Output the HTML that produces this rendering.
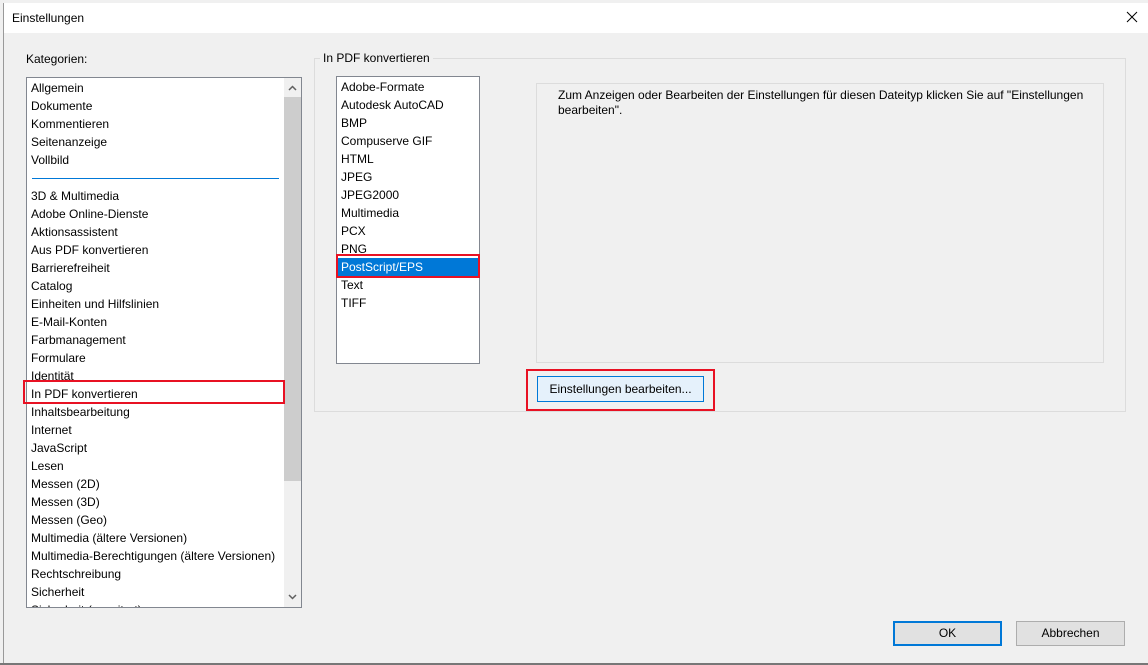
<!DOCTYPE html>
<html><head><style>
body{margin:0;width:1148px;height:665px;background:#f0f0f0;font-family:"Liberation Sans",sans-serif;font-size:12px;color:#000;position:relative;overflow:hidden}
.a{position:absolute}
.list div{height:18px;line-height:18px;padding-left:4px;white-space:nowrap}
.rl{position:absolute;border:2px solid #e81123}
</style></head><body>
<div class="a" style="left:0;top:0;width:1148px;height:3px;background:#f0f0f0"></div>
<div class="a" style="left:3px;top:3px;width:1145px;height:30px;background:#fff"></div>
<div class="a" style="left:3px;top:3px;width:1px;height:662px;background:#999"></div>
<div class="a" style="left:0;top:663px;width:1148px;height:2px;background:#777"></div>
<div class="a" style="left:12px;top:11px">Einstellungen</div>
<svg class="a" style="left:1126px;top:11px" width="12" height="12"><path d="M1 1L11 11M11 1L1 11" stroke="#000" stroke-width="1"/></svg>

<div class="a" style="left:26px;top:52px">Kategorien:</div>
<div class="a" style="left:26px;top:77px;width:274px;height:529px;background:#fff;border:1px solid #828790;overflow:hidden">
 <div class="list" style="position:absolute;left:0;top:1px;width:257px">
 <div>Allgemein</div><div>Dokumente</div><div>Kommentieren</div><div>Seitenanzeige</div><div>Vollbild</div>
 <div style="position:relative"><span style="position:absolute;left:5px;top:9px;width:247px;height:1px;background:#0078d7"></span></div>
 <div>3D &amp; Multimedia</div><div>Adobe Online-Dienste</div><div>Aktionsassistent</div><div>Aus PDF konvertieren</div><div>Barrierefreiheit</div><div>Catalog</div><div>Einheiten und Hilfslinien</div><div>E-Mail-Konten</div><div>Farbmanagement</div><div>Formulare</div><div>Identität</div><div>In PDF konvertieren</div><div>Inhaltsbearbeitung</div><div>Internet</div><div>JavaScript</div><div>Lesen</div><div>Messen (2D)</div><div>Messen (3D)</div><div>Messen (Geo)</div><div>Multimedia (ältere Versionen)</div><div>Multimedia-Berechtigungen (ältere Versionen)</div><div>Rechtschreibung</div><div>Sicherheit</div><div>Sicherheit (erweitert)</div>
 </div>
 <div class="a" style="left:257px;top:0;width:17px;height:529px;background:#f0f0f0"></div>
 <div class="a" style="left:257px;top:19px;width:17px;height:384px;background:#cdcdcd"></div>
 <svg class="a" style="left:261px;top:7px" width="9" height="6"><path d="M1 5L4.5 1.5L8 5" stroke="#606060" stroke-width="1.5" fill="none"/></svg>
 <svg class="a" style="left:261px;top:516px" width="9" height="6"><path d="M1 1L4.5 4.5L8 1" stroke="#606060" stroke-width="1.5" fill="none"/></svg>
</div>
<div class="rl" style="left:23px;top:380px;width:258px;height:20px"></div>

<div class="a" style="left:314px;top:58px;width:810px;height:352px;border:1px solid #dcdcdc"></div>
<div class="a" style="left:320px;top:51px;background:#f0f0f0;padding:0 3px">In PDF konvertieren</div>
<div class="a" style="left:336px;top:76px;width:142px;height:286px;background:#fff;border:1px solid #828790">
 <div class="list" style="position:absolute;left:0;top:1px;width:142px">
 <div>Adobe-Formate</div><div>Autodesk AutoCAD</div><div>BMP</div><div>Compuserve GIF</div><div>HTML</div><div>JPEG</div><div>JPEG2000</div><div>Multimedia</div><div>PCX</div><div>PNG</div><div style="background:#0078d7;color:#fff">PostScript/EPS</div><div>Text</div><div>TIFF</div>
 </div>
</div>
<div class="rl" style="left:336px;top:254px;width:140px;height:20px"></div>
<div class="a" style="left:536px;top:83px;width:566px;height:278px;border:1px solid #dcdcdc"></div>
<div class="a" style="left:558px;top:88px;width:530px;line-height:15px">Zum Anzeigen oder Bearbeiten der Einstellungen für diesen Dateityp klicken Sie auf "Einstellungen bearbeiten".</div>
<div class="a" style="left:537px;top:376px;width:165px;height:24px;background:#e5f1fb;border:1px solid #0078d7;text-align:center;line-height:24px">Einstellungen bearbeiten...</div>
<div class="rl" style="left:526px;top:369px;width:185px;height:38px"></div>

<div class="a" style="left:893px;top:621px;width:105px;height:21px;background:#e1e1e1;border:2px solid #0078d7;text-align:center;line-height:21px">OK</div>
<div class="a" style="left:1016px;top:621px;width:107px;height:23px;background:#e1e1e1;border:1px solid #adadad;text-align:center;line-height:23px">Abbrechen</div>
</body></html>
